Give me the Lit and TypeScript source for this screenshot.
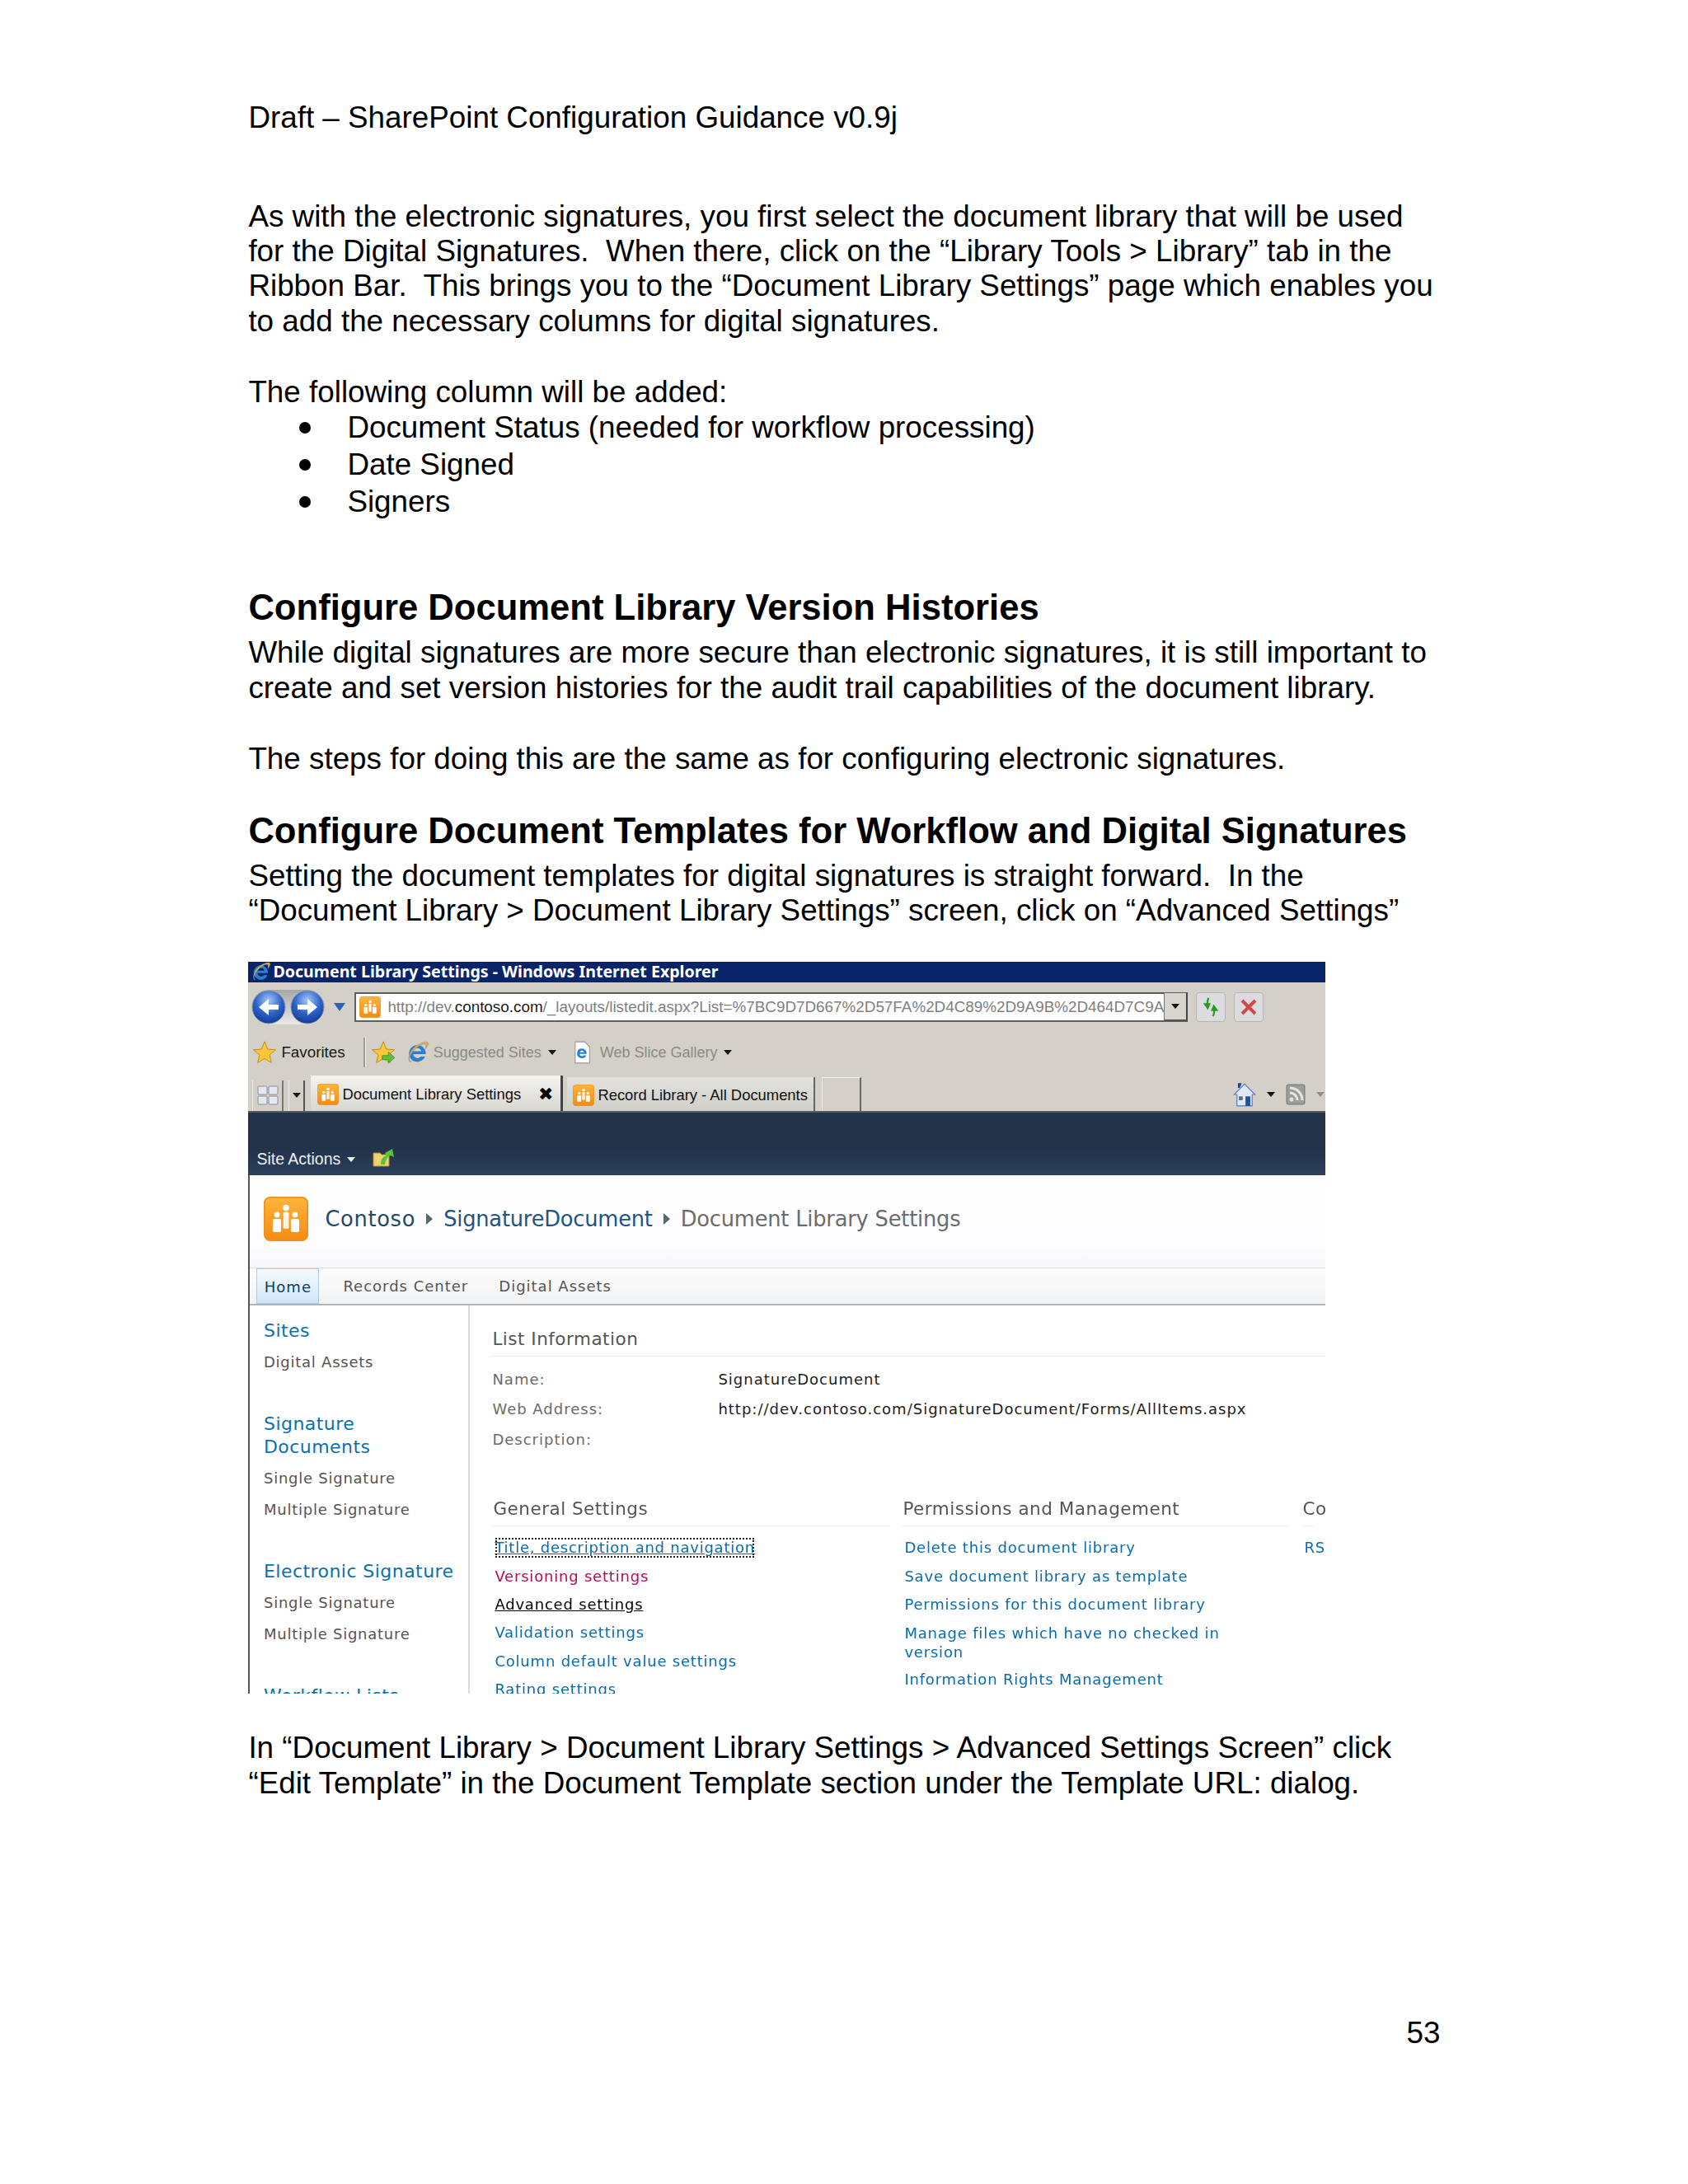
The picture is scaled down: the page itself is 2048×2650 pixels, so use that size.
import { LitElement, html, css, svg } from "lit";
import { customElement } from "lit/decorators.js";

const spLogo = (size: number, cls = "") => html`<svg class=${cls} width=${size} height=${size} viewBox="0 0 32 32">
  <defs><linearGradient id="og" x1="0" y1="0" x2="0" y2="1"><stop offset="0" stop-color="#fdb53c"/><stop offset="1" stop-color="#f78a12"/></linearGradient></defs>
  <rect x="0.5" y="0.5" width="31" height="31" rx="4" fill="url(#og)" stroke="#e8941e"/>
  <circle cx="16" cy="8" r="2.2" fill="#fff"/><rect x="14" y="11" width="4" height="12" rx="1" fill="#fff" opacity=".9"/>
  <circle cx="9.5" cy="13" r="2" fill="#fff"/><rect x="6.5" y="16" width="6" height="9.5" rx="1" fill="#fff"/>
  <circle cx="22.5" cy="13" r="2" fill="#fff"/><rect x="19.5" y="16" width="6" height="9.5" rx="1" fill="#fff"/>
</svg>`;

const navBtn = (flip: boolean) => html`<svg width="42" height="42" viewBox="0 0 42 42">
  <defs><radialGradient id="bb" cx=".5" cy=".3" r=".8"><stop offset="0" stop-color="#a8c8f4"/><stop offset=".5" stop-color="#2c62c8"/><stop offset="1" stop-color="#0b2f86"/></radialGradient></defs>
  <circle cx="21" cy="21" r="20" fill="url(#bb)" stroke="#8a93a8"/>
  <path d=${flip ? "M9 18h12v-7l12 10-12 10v-7H9z" : "M33 18H21v-7L9 21l12 10v-7h12z"} fill="#fff"/>
</svg>`;

const ieIcon = (size: number) => html`<svg width=${size} height=${size} viewBox="2 1 21 22">
  <path d="M12 5a8 8 0 1 0 7.4 11h-4.2a4 4 0 0 1-7-2.4H20a8 8 0 0 0-8-8.6zM8.3 10.8a3.8 3.8 0 0 1 7.4 0z" fill="#2a7fd0"/>
  <path d="M5 21C2 19 5 9 12 5c4-2.500 9-4 10-2.500 1 1-.5 4-2 6 0-2 .5-4-.5-4.500C16 3 7 9 4.500 17c-.5 2 0 3.500 1.500 3.500z" fill="#e8b030" stroke="#7a8fae" stroke-width=".4"/>
</svg>`;

const star = (arrow = false) => html`<svg width="30" height="30" viewBox="0 0 24 24">
  <path d="M12 1.500l3 7.300 7.800.6-6 5 1.900 7.600L12 18l-6.700 4 1.900-7.600-6-5 7.800-.6z" fill="#fcc83a" stroke="#c58a1a" stroke-width=".8"/>
  ${arrow ? svg`<path d="M11 15h6v-3.500l6 5.500-6 5.500V19h-6z" fill="#5cc03a" stroke="#3a8a20" stroke-width=".6"/>` : ""}
</svg>`;

const caret = (dim = false) => html`<svg class="caret" width="10" height="6" viewBox="0 0 10 6"><path d="M0 0h10L5 6z" fill=${dim ? "#8f8f8f" : "#111"}/></svg>`;

const tri = () => html`<svg class="tri" width="8" height="14" viewBox="0 0 8 14"><path d="M0 0l8 7-8 7z" fill="#5a6470"/></svg>`;

const general = ["Title, description and navigation", "Versioning settings", "Advanced settings", "Validation settings", "Column default value settings", "Rating settings"];

@customElement("app-root")
export class AppRoot extends LitElement {
  static styles = css`
    :host { display: block; background: #fff; }
    .page { width: 2048px; height: 2650px; box-sizing: border-box; padding: 122.4px 0 0 301.4px; background: #fff; color: #000;
      font: 36.8px/42.3px "Liberation Sans", Arial, sans-serif; white-space: nowrap; overflow: hidden; }
    .gap-para { margin-top: 77px; }
    .gap-line { margin-top: 43.7px; }
    .bullet { display: flex; align-items: center; height: 44.8px; }
    .dot { width: 14px; height: 14px; border-radius: 50%; background: #000; margin-left: 62px; margin-right: 44px; }
    h2 { font-size: 43.6px; line-height: 50px; font-weight: 700; margin: 0 0 9px; }
    .h1 { margin-top: 81px; }
    .h2b { margin-top: 41px; }
    .num { margin-top: 261px; width: 1446px; text-align: right; }
    .after { margin-top: 45px; }

    .shot { margin-top: 41px; width: 1307px; height: 888px; overflow: hidden; display: flex; flex-direction: column; background: #fff;
      font: 18px/22px "DejaVu Sans", Verdana, sans-serif; filter: blur(0.45px); }
    .title { height: 25px; box-sizing: border-box; padding: 0 0 2px 4px; background: #0a246a; color: #fff; font: 700 19.6px/23px "Noto Sans", Tahoma, sans-serif; display: flex; align-items: center; gap: 2px; flex: none; }
    .chrome { background: #d4d0c8; flex: none; font-family: "Liberation Sans", Tahoma, sans-serif; }
    .r1 { height: 59px; display: flex; align-items: center; padding-left: 4px; }
    .backs { display: flex; gap: 5px; border-radius: 24px; background: linear-gradient(#a8a8ac, #e8e8e8); }
    .mini { margin: 0 10px 0 10px; }
    .addr { width: 1011px; height: 36px; box-sizing: border-box; background: #fff; border: 2px solid #5f5f5f; border-right-color: #444; display: flex; align-items: center; padding-left: 4px; font-size: 18.85px; color: #808080; }
    .addr > svg { margin-right: 8px; flex: none; }
    .addr b { font-weight: 400; color: #1a1a1a; }
    .addr .u { flex: 1; overflow: hidden; }
    .combo { width: 26px; height: 32px; background: #d8d5ce; border-left: 1px solid #777; border-bottom: 2px solid #555; display: flex; align-items: center; justify-content: center; flex: none; }
    .tb { width: 36px; height: 36px; box-sizing: border-box; border: 1px solid #b4b4ba; border-radius: 4px; background: #dcdce0; display: flex; align-items: center; justify-content: center; margin-left: 10px; }
    .r2 { height: 51px; display: flex; align-items: center; padding-left: 5px; font-size: 18px; color: #8a8a8a; }
    .fav { color: #1a1a1a; margin: 0 22px 0 5px; font-size: 18.8px; }
    .sep { width: 2px; height: 36px; background: #9c9a94; border-right: 1px solid #f4f4f0; margin-right: 6px; }
    .r2 svg { flex: none; }
    .sp { width: 13px; }
    .sg { margin-left: 5px; }
    .wb { margin-left: 10px; }
    .r2 .caret { margin: 0 19px 0 8px; }
    .r3 { height: 47.5px; display: flex; align-items: flex-end; padding-left: 5px; border-bottom: 2px solid #5c5c5c; box-sizing: border-box; font-size: 18.4px; color: #111; }
    .grp { width: 38px; height: 37px; box-sizing: border-box; border-right: 2px solid #777; border-left: 1px solid #eee; display: flex; align-items: center; justify-content: center; }
    .grp2 { width: 20px; height: 37px; box-sizing: border-box; border-right: 2px solid #555; border-left: 1px solid #eee; display: flex; align-items: center; justify-content: center; margin-left: 6px; }
    .tab { height: 43px; display: flex; align-items: center; box-sizing: border-box; padding-top: 3px; }
    .tab.a { width: 306px; margin-left: 7px; padding-left: 8px; background: linear-gradient(#f4f3f1, #d8d6d0); border-right: 3px solid #444; }
    .tab.b { width: 301px; margin-left: 5px; padding-left: 7px; border-right: 2px solid #666; height: 41px; background: linear-gradient(#e4e2de, #d0cec8); }
    .tab.c { width: 48px; margin-left: 8px; border-right: 2px solid #666; border-left: 1px solid #f0f0ec; height: 41px; border-top: 1px solid #f0f0ec; }
    .tab svg { margin-right: 4px; flex: none; }
    .x { font: 700 22px/1 "DejaVu Sans", sans-serif; margin-left: 21px; color: #000; }
    .tools { margin-left: auto; display: flex; align-items: center; height: 40px; gap: 13px; padding-right: 1px; }
    .dark { height: 76.5px; flex: none; background: linear-gradient(#22334a, #22334a 60%, #2c405c); display: flex; align-items: flex-end; padding: 0 0 9px 10px; box-sizing: border-box; color: #eef1f5; font: 19.5px/22px "Liberation Sans", sans-serif; }
    .dark .caret { margin: 0 21px 7px 8px; filter: invert(1); }
    .main { flex: 1; min-height: 0; border-left: 2px solid #555; background: #fff; display: flex; flex-direction: column; }
    .crumb { height: 111.5px; flex: none; display: flex; align-items: center; padding: 0 0 6px 17px; box-sizing: border-box; font-size: 25.7px; background: linear-gradient(#fff, #fdfcfe 70%, #f8f8fa); color: #1f4a68; letter-spacing: -.2px; }
    .crumb .lg { margin-right: 20px; }
    .crumb .first { letter-spacing: .7px; }
    .crumb .blue { color: #1d5585; }
    .crumb .gray { color: #6c6c6c; }
    .crumb .tri { margin: 0 13px; }
    .nav { height: 46.5px; flex: none; display: flex; align-items: stretch; padding-left: 8px; border-top: 1px solid #dedede; border-bottom: 2px solid #b4b4b4; box-sizing: border-box; background: linear-gradient(#fcfcfc, #f2f3f4); color: #555; letter-spacing: 1px; line-height: 43px; }
    .nav span.h { width: 76px; box-sizing: border-box; border: 1px solid #a8d0ec; background: linear-gradient(#f6fbff, #cfe6f8); color: #0b3d68; text-align: center; margin-right: 29px; }
    .nav span.o { margin-right: 37px; }
    .body { flex: 1; min-height: 0; display: flex; overflow: hidden; }
    .left { width: 267px; flex: none; box-sizing: border-box; border-right: 2px solid #dadada; padding: 16.4px 0 0 16.6px; color: #555; letter-spacing: .75px; }
    .left .hd { font-size: 22px; line-height: 28px; color: #0a70b0; letter-spacing: .45px; }
    .left .it { height: 38px; line-height: 38px; }
    .left .hd + .it { margin-top: 5.5px; }
    .left .sec { margin-top: 41.5px; }
    .content { flex: 1; min-width: 0; padding: 25.4px 0 0 27px; color: #6a6a6a; }
    .sh { font-size: 21.5px; line-height: 30px; letter-spacing: .5px; color: #555; margin-bottom: 5px; }
    .rule { height: 1px; background: #ececec; margin-left: -2px; }
    .info { display: grid; grid-template-columns: 274px 1fr; grid-auto-rows: 36.5px; margin-top: 10px; line-height: 36.5px; letter-spacing: 1px; }
    .info b { font-weight: 400; color: #1c1c1c; }
    .cols { display: grid; grid-template-columns: 497px 485px 1fr; margin-top: 51px; }
    .col .sh { padding-left: 1px; }
    .col .rule { margin-right: 14px; }
    .col { min-width: 0; overflow: hidden; }
    .links { padding: 9px 0 0 3px; color: #0a6cad; line-height: 34.4px; letter-spacing: .8px; }
    .links div { height: 34.4px; }
    .links .w { height: 56.8px; line-height: 23.5px; padding-top: 5.2px; box-sizing: border-box; }
    .focus { outline: 2px dotted #222; outline-offset: -3px; text-decoration: underline; display: inline-block; line-height: 26px; letter-spacing: .76px; }
    .links .vs { color: #b80a5c; }
    .hov { color: #000; text-decoration: underline; }
  `;

  render() {
    return html`<div class="page">
      <div>Draft – SharePoint Configuration Guidance v0.9j</div>
      <div class="gap-para">
        <div>As with the electronic signatures, you first select the document library that will be used</div>
        <div>for the Digital Signatures.&nbsp; When there, click on the “Library Tools &gt; Library” tab in the</div>
        <div>Ribbon Bar.&nbsp; This brings you to the “Document Library Settings” page which enables you</div>
        <div>to add the necessary columns for digital signatures.</div>
      </div>
      <div class="gap-line">The following column will be added:</div>
      <div class="bullet"><span class="dot"></span>Document Status (needed for workflow processing)</div>
      <div class="bullet"><span class="dot"></span>Date Signed</div>
      <div class="bullet"><span class="dot"></span>Signers</div>
      <h2 class="h1">Configure Document Library Version Histories</h2>
      <div>While digital signatures are more secure than electronic signatures, it is still important to</div>
      <div>create and set version histories for the audit trail capabilities of the document library.</div>
      <div class="gap-line">The steps for doing this are the same as for configuring electronic signatures.</div>
      <h2 class="h2b">Configure Document Templates for Workflow and Digital Signatures</h2>
      <div>Setting the document templates for digital signatures is straight forward.&nbsp; In the</div>
      <div>“Document Library &gt; Document Library Settings” screen, click on “Advanced Settings”</div>
      ${this.shot()}
      <div class="after">In “Document Library &gt; Document Library Settings &gt; Advanced Settings Screen” click</div>
      <div>“Edit Template” in the Document Template section under the Template URL: dialog.</div>
      <div class="num">53</div>
    </div>`;
  }

  shot() {
    return html`<div class="shot">
      <div class="title">${ieIcon(24)}<span>Document Library Settings - Windows Internet Explorer</span></div>
      <div class="chrome">
        <div class="r1">
          <div class="backs">${navBtn(false)}${navBtn(true)}</div>
          <svg class="mini" width="16" height="10" viewBox="0 0 16 10"><path d="M1 0h14L8 10z" fill="#2c62b0"/></svg>
          <div class="addr">${spLogo(26)}<span class="u">http://dev.<b>contoso.com</b>/_layouts/listedit.aspx?List=%7BC9D7D667%2D57FA%2D4C89%2D9A9B%2D464D7C9A</span><span class="combo">${caret()}</span></div>
          <div class="tb"><svg width="28" height="28" viewBox="0 0 24 24"><path d="M9 2c-1 2-1.500 4-1.500 6H4l5 7 3-7H9.500c0-2 .5-4 1-5zM15 22c1-2 1.500-4 1.500-6H20l-5-7-3 7h2.500c0 2-.5 4-1 5z" fill="#2a9a2a"/></svg></div>
          <div class="tb"><svg width="24" height="24" viewBox="0 0 24 24"><path d="M4 4l16 16M20 4L4 20" stroke="#d04848" stroke-width="4"/></svg></div>
        </div>
        <div class="r2">
          ${star()}<span class="fav">Favorites</span><span class="sep"></span>
          ${star(true)}<span class="sp"></span>${ieIcon(28)}<span class="sg">Suggested Sites</span>${caret()}
          <svg width="24" height="28" viewBox="0 0 20 24"><path d="M3 1h10l5 5v17H3z" fill="#fff" stroke="#9a9a9a"/><path d="M10 8a5 5 0 1 0 4.600 7h-2.600a2.500 2.500 0 0 1-4.400-1.500H15A5 5 0 0 0 10 8zM7.800 11.800a2.300 2.300 0 0 1 4.400 0z" fill="#2a7fd0"/></svg>
          <span class="wb">Web Slice Gallery</span>${caret()}
        </div>
        <div class="r3">
          <span class="grp"><svg width="26" height="24" viewBox="0 0 26 24"><g fill="#e6e8f0" stroke="#8c8ca0"><rect x="1" y="1" width="11" height="10" rx="1"/><rect x="14" y="1" width="11" height="10" rx="1"/><rect x="1" y="13" width="11" height="10" rx="1"/><rect x="14" y="13" width="11" height="10" rx="1"/></g></svg></span>
          <span class="grp2">${caret()}</span>
          <div class="tab a">${spLogo(26)}<span>Document Library Settings</span><span class="x">✖</span></div>
          <div class="tab b">${spLogo(26)}<span>Record Library - All Documents</span></div>
          <div class="tab c"></div>
          <div class="tools">
            <svg width="28" height="30" viewBox="0 0 24 26"><path d="M12 2L1 13h3v12h16V13h3z" fill="#dfe8f6" stroke="#5a78c0"/><rect x="13" y="15" width="5" height="10" fill="#2050a0"/><rect x="6" y="15" width="4" height="4" fill="#5a6a80"/><path d="M5 1h4l-2 5H5z" fill="#2040a0"/></svg>
            ${caret()}
            <svg width="24" height="26" viewBox="0 0 24 26"><rect x="1" y="1" width="22" height="24" rx="2" fill="#9c9c98" stroke="#777"/><circle cx="7" cy="19" r="2.500" fill="#e4e4e0"/><path d="M5 11a9 9 0 0 1 9 9M5 5a15 15 0 0 1 15 15" fill="none" stroke="#e4e4e0" stroke-width="3"/></svg>
            ${caret(true)}
          </div>
        </div>
      </div>
      <div class="dark">
        <span>Site Actions</span>${caret()}
        <svg width="28" height="26" viewBox="0 0 28 26"><path d="M1 8h8l2 2h9v14H1z" fill="#f0d070" stroke="#a88a30"/><path d="M10 22c0-7 3-10 7-11l-2-3 9-5 2 10-4-2c-3 1-6 4-7 11z" fill="#5cc03a"/></svg>
      </div>
      <div class="main">
        <div class="crumb">${spLogo(54, "lg")}<span class="first">Contoso</span>${tri()}<span class="blue">SignatureDocument</span>${tri()}<span class="gray">Document Library Settings</span></div>
        <div class="nav"><span class="h">Home</span><span class="o">Records Center</span><span class="o">Digital Assets</span></div>
        <div class="body">
          <div class="left">
            <div class="hd">Sites</div>
            <div class="it">Digital Assets</div>
            <div class="hd sec">Signature</div>
            <div class="hd">Documents</div>
            <div class="it">Single Signature</div>
            <div class="it">Multiple Signature</div>
            <div class="hd sec">Electronic Signature</div>
            <div class="it">Single Signature</div>
            <div class="it">Multiple Signature</div>
            <div class="hd sec">Workflow Lists</div>
          </div>
          <div class="content">
            <div class="sh">List Information</div>
            <div class="rule"></div>
            <div class="info">
              <span>Name:</span><b>SignatureDocument</b>
              <span>Web Address:</span><b>http://dev.contoso.com/SignatureDocument/Forms/AllItems.aspx</b>
              <span>Description:</span><b></b>
            </div>
            <div class="cols">
              <div class="col"><div class="sh">General Settings</div><div class="rule"></div>
                <div class="links">
                  <div><span class="focus">${general[0]}</span></div>
                  <div class="vs">${general[1]}</div>
                  <div><span class="hov">${general[2]}</span></div>
                  <div>${general[3]}</div>
                  <div>${general[4]}</div>
                  <div>${general[5]}</div>
                </div>
              </div>
              <div class="col"><div class="sh">Permissions and Management</div><div class="rule"></div>
                <div class="links">
                  <div>Delete this document library</div>
                  <div>Save document library as template</div>
                  <div>Permissions for this document library</div>
                  <div class="w">Manage files which have no checked in<br />version</div>
                  <div>Information Rights Management</div>
                </div>
              </div>
              <div class="col"><div class="sh">Co</div><div class="rule"></div>
                <div class="links"><div>RS</div></div>
              </div>
            </div>
          </div>
        </div>
      </div>
    </div>`;
  }
}
